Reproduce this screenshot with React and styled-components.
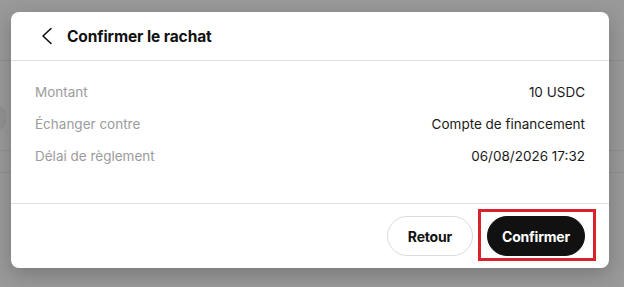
import React from "react"
import styled, { createGlobalStyle } from "styled-components"

const GlobalStyle = createGlobalStyle`
  html, body {
    margin: 0;
    padding: 0;
    background: #fff;
    font-family: Inter, "Noto Sans", sans-serif;
    -webkit-font-smoothing: antialiased;
  }
`

const Page = styled.div`
  position: relative;
  width: 624px;
  height: 287px;
  overflow: hidden;
  background: #fff;
`

const BehindLine = styled.div`
  position: absolute;
  left: 0;
  right: 0;
  top: ${(p) => p.$top}px;
  height: 1px;
  background: #eee;
`

const BehindPill = styled.div`
  position: absolute;
  left: -20px;
  top: 106px;
  width: 26px;
  height: 24px;
  border-radius: 8px;
  background: #f2f2f2;
`

const Overlay = styled.div`
  position: absolute;
  inset: 0;
  background: rgba(0, 0, 0, 0.4);
  padding: 12px 15px 0 11px;
`

const Modal = styled.div`
  width: 598px;
  background: #fff;
  border-radius: 8px;
  box-shadow: 0 6px 20px rgba(0, 0, 0, 0.22);
  display: flex;
  flex-direction: column;
`

const Header = styled.div`
  height: 48px;
  display: flex;
  align-items: center;
  gap: 14px;
  padding: 0 24px 0 30px;
  border-bottom: 1px solid #e2e2e2;
`

const BackButton = styled.button`
  border: 0;
  background: none;
  padding: 0;
  width: 12px;
  height: 20px;
  display: flex;
  align-items: center;
  justify-content: center;
  color: #111;
  cursor: pointer;
`

const Title = styled.h2`
  margin: 0;
  font-size: 15.5px;
  font-weight: 700;
  color: #111;
  letter-spacing: -0.1px;
`

const Body = styled.div`
  padding: 21px 24px 37px;
  display: flex;
  flex-direction: column;
  gap: 12px;
  border-bottom: 1px solid #e2e2e2;
`

const Row = styled.div`
  height: 20px;
  display: flex;
  align-items: center;
  justify-content: space-between;
  font-size: 13.5px;
`

const Label = styled.span`
  color: #9c9c9c;
`

const Value = styled.span`
  color: #1a1a1a;
`

const Footer = styled.div`
  display: flex;
  justify-content: flex-end;
  align-items: center;
  gap: 14px;
  padding: 12px 24px;
`

const Button = styled.button`
  height: 40px;
  padding: 0 ${(p) => (p.$primary ? 14 : 20)}px;
  border-radius: 20px;
  border: 1px solid ${(p) => (p.$primary ? "#111" : "#dcdcdc")};
  background: ${(p) => (p.$primary ? "#111" : "#fff")};
  color: ${(p) => (p.$primary ? "#fff" : "#111")};
  font-family: inherit;
  font-size: 14px;
  font-weight: 700;
  letter-spacing: -0.2px;
  cursor: pointer;
`

const Highlight = styled.div`
  position: relative;
  display: flex;

  &::after {
    content: "";
    position: absolute;
    top: -7px;
    bottom: -5px;
    left: -9px;
    right: -11px;
    border: 3px solid #d9222c;
    pointer-events: none;
  }
`

const rows = [
  ["Montant", "10 USDC"],
  ["Échanger contre", "Compte de financement"],
  ["Délai de règlement", "06/08/2026 17:32"],
]

const App = () => {
  return (
    <Page>
      <GlobalStyle />
      <BehindLine $top={60} />
      <BehindLine $top={150} />
      <BehindLine $top={172} />
      <BehindPill />
      <Overlay>
        <Modal>
          <Header>
            <BackButton aria-label="Retour">
              <svg width="12" height="18" viewBox="0 0 12 18" fill="none">
                <path d="M10 1.5 L2 9 L10 16.5" stroke="currentColor" strokeWidth="1.6" strokeLinecap="round" strokeLinejoin="round" />
              </svg>
            </BackButton>
            <Title>Confirmer le rachat</Title>
          </Header>
          <Body>
            {rows.map(([label, value]) => (
              <Row key={label}>
                <Label>{label}</Label>
                <Value>{value}</Value>
              </Row>
            ))}
          </Body>
          <Footer>
            <Button>Retour</Button>
            <Highlight>
              <Button $primary>Confirmer</Button>
            </Highlight>
          </Footer>
        </Modal>
      </Overlay>
    </Page>
  )
}

export default App
